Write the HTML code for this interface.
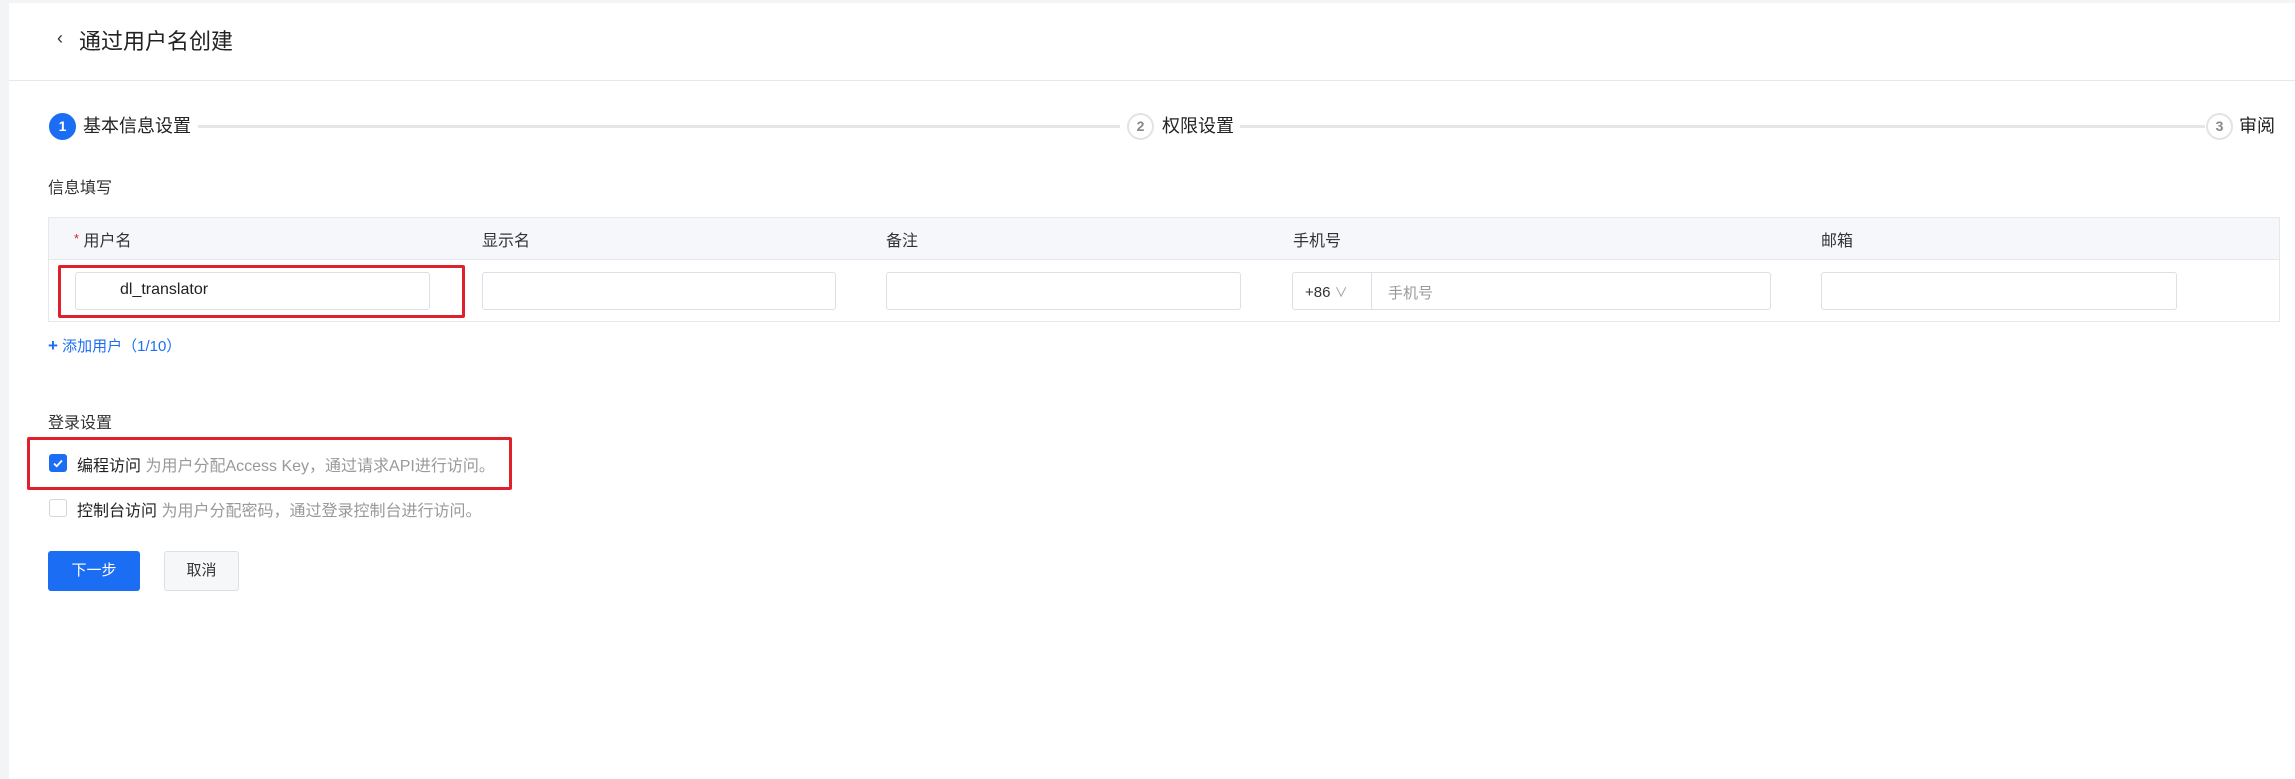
<!DOCTYPE html>
<html><head><meta charset="utf-8"><style>
*{margin:0;padding:0;box-sizing:border-box}
body{width:2295px;height:779px;background:#f3f4f6;font-family:"Liberation Sans","Noto Sans CJK SC",sans-serif;color:#222;position:relative;overflow:hidden}
.card{position:absolute;left:9px;top:3px;right:0;bottom:0;background:#fff}
.a{position:absolute;white-space:nowrap}
.circ{position:absolute;width:27px;height:27px;border-radius:50%;border:2px solid #e3e3e3;color:#888;font-size:14px;font-weight:bold;text-align:center;line-height:23px;background:#fff}
.line{position:absolute;height:3px;background:#e6e6e6;top:125px}
.inp{position:absolute;top:272px;height:38px;border:1px solid #dcdfe6;border-radius:3px;background:#fff}
.red{position:absolute;border:3px solid #e0202a;border-radius:2px}
.cb{position:absolute;width:18px;height:18px;border:1px solid #d6d6d6;border-radius:3px;background:#fff}
</style></head><body>
<div class="card"></div>
<div class="a" style="left:57px;top:28px;font-size:18px;color:#333">‹</div>
<div class="a" style="left:79px;top:24px;font-size:22px;color:#222">通过用户名创建</div>
<div class="a" style="left:9px;top:80px;width:2286px;height:1px;background:#e8e8e8"></div>

<div class="circ" style="left:49px;top:113px;background:#1b6ef3;border-color:#1b6ef3;color:#fff">1</div>
<div class="a" style="left:83px;top:112px;font-size:18px">基本信息设置</div>
<div class="line" style="left:198px;width:922px"></div>
<div class="circ" style="left:1127px;top:113px">2</div>
<div class="a" style="left:1162px;top:112px;font-size:18px">权限设置</div>
<div class="line" style="left:1240px;width:965px"></div>
<div class="circ" style="left:2206px;top:113px">3</div>
<div class="a" style="left:2239px;top:112px;font-size:18px">审阅</div>

<div class="a" style="left:48px;top:174px;font-size:16px;color:#333">信息填写</div>
<div class="a" style="left:48px;top:217px;width:2232px;height:105px;border:1px solid #e6e8eb"></div>
<div class="a" style="left:49px;top:218px;width:2230px;height:42px;background:#f5f7fa;border-bottom:1px solid #e6e8eb"></div>
<div class="a" style="left:74px;top:227px;font-size:16px;color:#333"><span style="color:#e0202a;font-size:13px;vertical-align:3px">*</span> 用户名</div>
<div class="a" style="left:482px;top:227px;font-size:16px;color:#333">显示名</div>
<div class="a" style="left:886px;top:227px;font-size:16px;color:#333">备注</div>
<div class="a" style="left:1293px;top:227px;font-size:16px;color:#333">手机号</div>
<div class="a" style="left:1821px;top:227px;font-size:16px;color:#333">邮箱</div>

<div class="inp" style="left:75px;width:355px"></div>
<div class="a" style="left:120px;top:281px;font-size:16px;color:#222">dl_translator</div>
<div class="inp" style="left:482px;width:354px"></div>
<div class="inp" style="left:886px;width:355px"></div>
<div class="inp" style="left:1292px;width:479px"></div>
<div class="a" style="left:1371px;top:273px;width:1px;height:36px;background:#dcdfe6"></div>
<div class="a" style="left:1305px;top:282px;font-size:15px;color:#333">+86 <span style="color:#999;font-size:13px">∨</span></div>
<div class="a" style="left:1388px;top:282px;font-size:15px;color:#999">手机号</div>
<div class="inp" style="left:1821px;width:356px"></div>
<div class="red" style="left:58px;top:265px;width:407px;height:53px"></div>

<div class="a" style="left:48px;top:335px;font-size:15px;color:#1b6ef3"><b style="font-size:17px">+</b> 添加用户（1/10）</div>

<div class="a" style="left:48px;top:409px;font-size:16px;color:#333">登录设置</div>
<div class="cb" style="left:49px;top:454px;background:#1b6ef3;border-color:#1b6ef3"><svg width="16" height="16" viewBox="0 0 16 16"><path d="M4 8.5l2.7 2.7L12 5.5" stroke="#fff" stroke-width="1.8" fill="none"/></svg></div>
<div class="a" style="left:77px;top:452px;font-size:16px;color:#222">编程访问 <span style="color:#999">为用户分配Access Key，通过请求API进行访问。</span></div>
<div class="red" style="left:27px;top:437px;width:485px;height:53px"></div>
<div class="cb" style="left:49px;top:499px"></div>
<div class="a" style="left:77px;top:497px;font-size:16px;color:#222">控制台访问 <span style="color:#999">为用户分配密码，通过登录控制台进行访问。</span></div>

<div class="a" style="left:48px;top:551px;width:92px;height:40px;background:#1b6ef3;border-radius:3px;color:#fff;font-size:15px;text-align:center;line-height:40px">下一步</div>
<div class="a" style="left:164px;top:551px;width:75px;height:40px;background:#f6f7f8;border:1px solid #dcdfe6;border-radius:3px;color:#333;font-size:15px;text-align:center;line-height:38px">取消</div>
</body></html>
